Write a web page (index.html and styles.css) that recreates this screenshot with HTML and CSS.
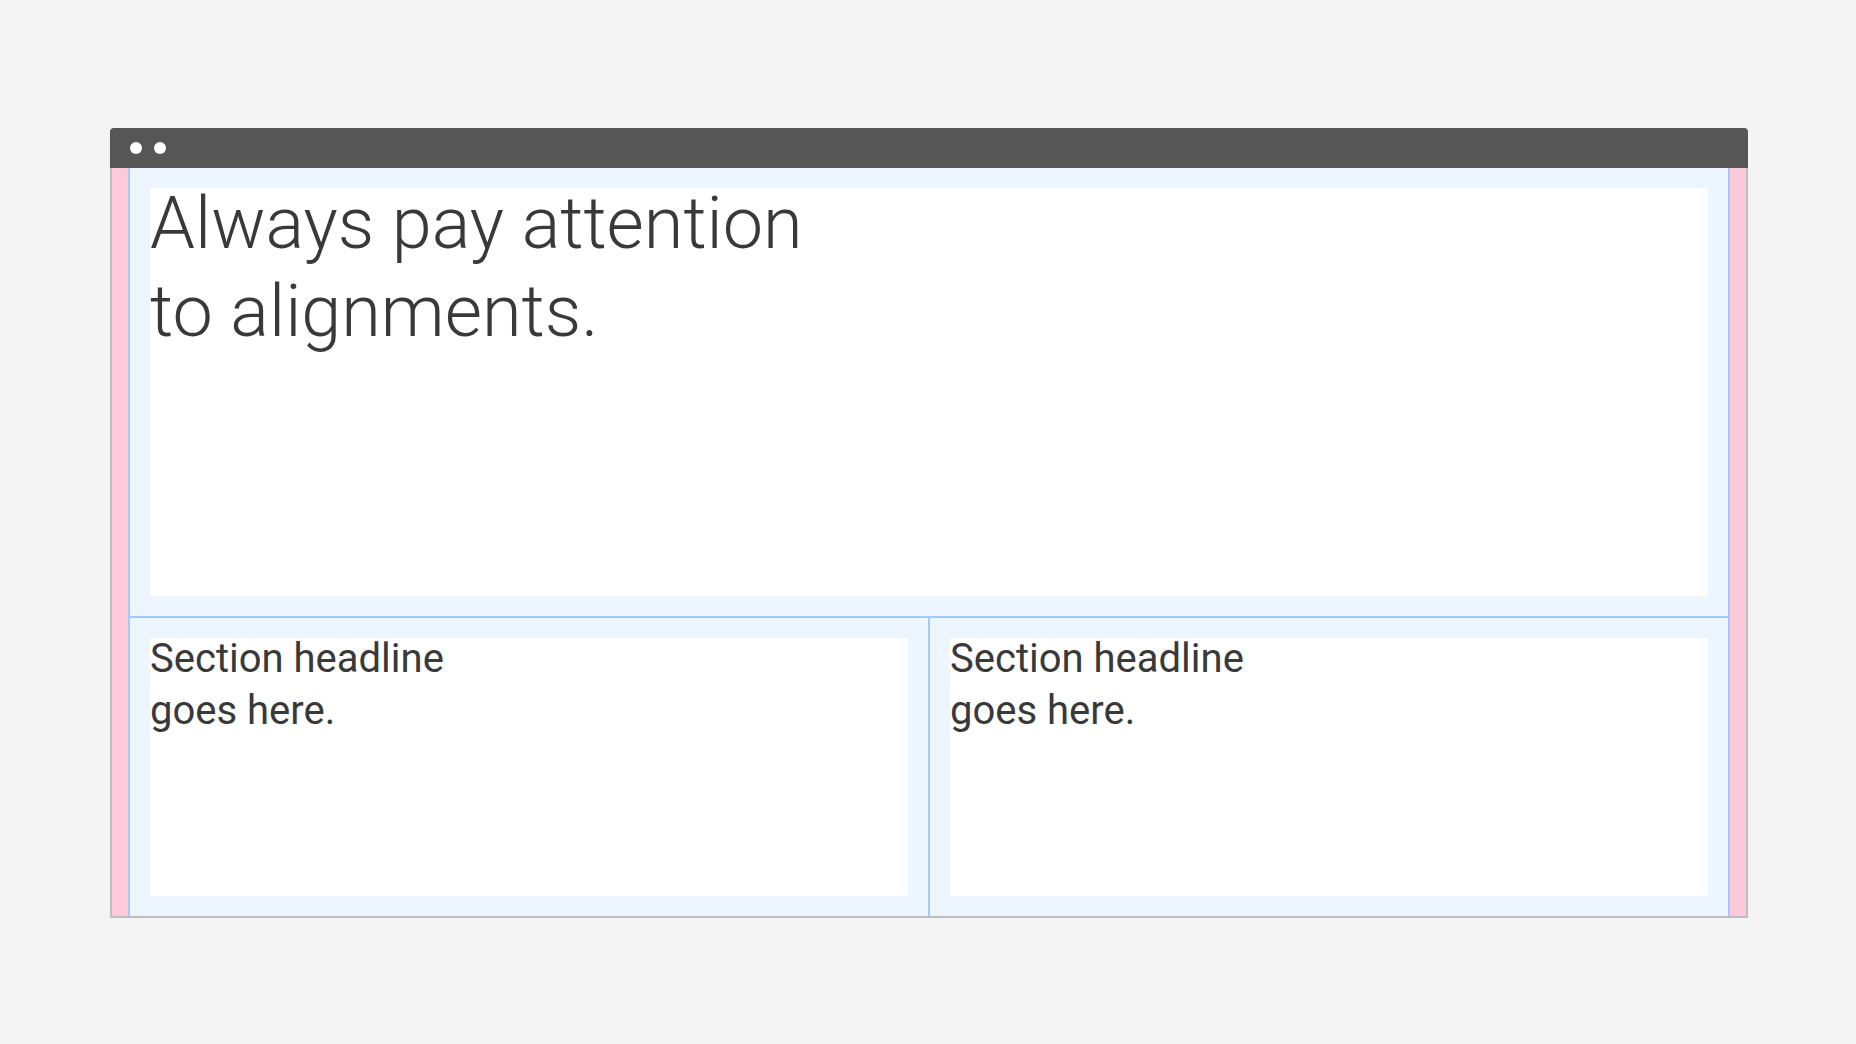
FILE: index.html
```html
<!DOCTYPE html>
<html lang="en">
<head>
<meta charset="utf-8">
<title>Alignments</title>
<link rel="stylesheet" href="styles.css">
</head>
<body>
  <div class="window">
    <div class="titlebar">
      <span class="dot"></span>
      <span class="dot"></span>
    </div>
    <div class="frame">
      <div class="grid">
        <div class="hero">
          <div class="card card-hero">
            <h1 class="headline"><span class="line">Always pay attention</span><span class="line">to alignments.</span></h1>
          </div>
        </div>
        <div class="row">
          <div class="col col-left">
            <div class="card card-section">
              <h2 class="section-title"><span class="line">Section headline</span><span class="line">goes here.</span></h2>
            </div>
          </div>
          <div class="col">
            <div class="card card-section">
              <h2 class="section-title"><span class="line">Section headline</span><span class="line">goes here.</span></h2>
            </div>
          </div>
        </div>
      </div>
    </div>
  </div>
</body>
</html>
```

FILE: styles.css
```css
* {
  box-sizing: border-box;
}

html, body {
  margin: 0;
  padding: 0;
}

body {
  background: #f4f4f4;
  padding: 128px 0 0 110px;
  font-family: Roboto, "Liberation Sans", sans-serif;
  color: #393939;
}

.window {
  width: 1638px;
}

.titlebar {
  height: 40px;
  background: #565656;
  border-radius: 4px 4px 0 0;
  display: flex;
  align-items: center;
  gap: 12px;
  padding-left: 20px;
}

.dot {
  width: 12px;
  height: 12px;
  border-radius: 50%;
  background: #ffffff;
}

.frame {
  background: #ffc9dc;
  border: 2px solid #bebebe;
  border-top: none;
  padding: 0 16px;
}

.grid {
  background: #edf5ff;
  border-left: 2px solid #a6c8ff;
  border-right: 2px solid #a6c8ff;
}

.hero {
  padding: 20px;
}

.card {
  background: #ffffff;
  display: flow-root;
}

.card-hero {
  height: 408px;
}

.card-section {
  height: 258px;
}

.row {
  display: flex;
  border-top: 2px solid #a6c8ff;
}

.col {
  flex: 1 1 auto;
  padding: 20px;
}

.col-left {
  flex: 0 0 800px;
  border-right: 2px solid #a6c8ff;
}

.line {
  display: block;
}

.headline {
  margin: 0;
  font-weight: 300;
  font-size: 72px;
  line-height: 71px;
}

.headline .line + .line {
  margin-top: 17px;
}

.section-title {
  margin: 0;
  font-weight: 400;
  font-size: 40px;
  line-height: 41px;
}

.section-title .line + .line {
  margin-top: 11px;
}
```
